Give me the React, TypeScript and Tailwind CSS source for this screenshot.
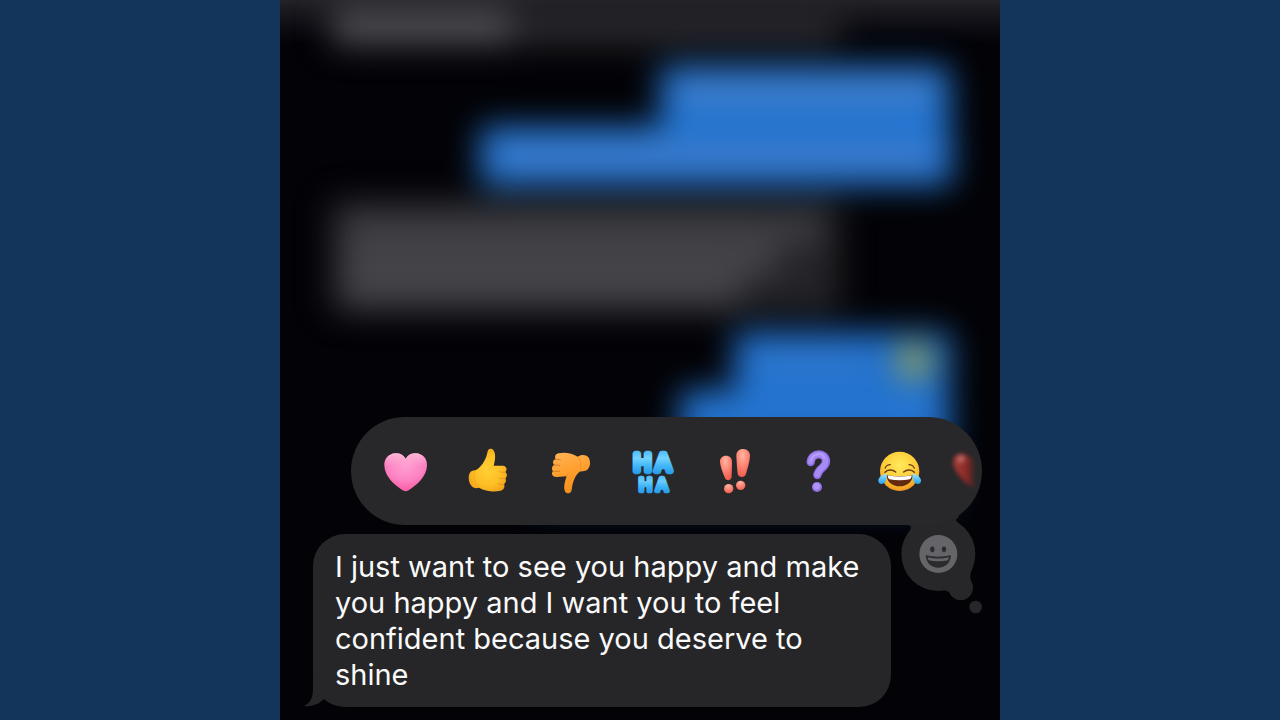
import React from "react";

function Heart() {
  return (
    <svg viewBox="33 51 144 144" className="size-12">
      <defs>
        <radialGradient id="heart" cx="0.5" cy="0.3" r="0.75">
          <stop offset="0" stopColor="#ffa0d2" />
          <stop offset="0.55" stopColor="#fd83c3" />
          <stop offset="1" stopColor="#f8549f" />
        </radialGradient>
        <linearGradient id="heartTop" x1="0" y1="0" x2="0" y2="1">
          <stop offset="0" stopColor="#ffc4dc" stopOpacity="0.8" />
          <stop offset="0.35" stopColor="#ffb0d4" stopOpacity="0" />
        </linearGradient>
      </defs>
      <path fill="url(#heart)" d="M107 86C100 74 88 69 76 70C56 71 42 87 43 107C45 140 72 163 98 181Q107 187 116 181C142 163 169 140 171 107C172 87 158 71 138 70C126 69 114 74 107 86Z" />
      <path fill="url(#heartTop)" d="M107 86C100 74 88 69 76 70C56 71 42 87 43 107C45 140 72 163 98 181Q107 187 116 181C142 163 169 140 171 107C172 87 158 71 138 70C126 69 114 74 107 86Z" />
    </svg>
  );
}

function ThumbUp() {
  return (
    <svg viewBox="280 51 144 144" className="size-12">
      <defs>
        <radialGradient id="up" cx="0.5" cy="0.5" r="0.6">
          <stop offset="0" stopColor="#ffd035" />
          <stop offset="0.6" stopColor="#fdbf25" />
          <stop offset="1" stopColor="#f2a01c" />
        </radialGradient>
      </defs>
      <path fill="url(#up)" d="M350 68C351 58 357 54 364 57C374 62 377 82 369 107L397 107C409 108 411 122 403 126C411 129 410 143 403 145C408 149 406 161 399 162C404 168 401 180 390 182C368 187 345 184 325 173C312 178 299 170 295 152C292 132 298 121 314 121C331 112 345 92 350 68Z" />
      <path fill="none" stroke="#e09018" strokeWidth="2.5" strokeLinecap="round" d="M405 126C398 128 392 127 387 125M405 145C398 147 392 146 386 144M400 163C393 164 387 163 383 161" />
      <path fill="none" stroke="#e8991c" strokeWidth="2.5" strokeLinecap="round" d="M369 107C365 113 360 116 354 117M313 122C307 136 311 160 325 173" opacity="0.5" />
    </svg>
  );
}

function ThumbDown() {
  return (
    <svg viewBox="48 51 144 144" className="size-12">
      <defs>
        <linearGradient id="down" x1="0" y1="0" x2="0.3" y2="1">
          <stop offset="0" stopColor="#ffb457" />
          <stop offset="0.55" stopColor="#ff9f2e" />
          <stop offset="1" stopColor="#f5901e" />
        </linearGradient>
      </defs>
      <path fill="url(#down)" d="M86 70C103 66 126 69 143 80C155 72 171 74 177 85C183 98 180 112 172 119C163 125 154 123 149 125C135 136 128 155 125 180C123 191 111 193 106 186C100 176 103 158 110 139L80 141C66 142 62 128 70 124C64 120 65 107 73 105C67 101 68 89 77 88C73 80 77 71 86 70Z" />
      <path fill="none" stroke="#cf701a" strokeWidth="2.5" strokeLinecap="round" d="M76 89C82 87 87 88 91 90M71 106C77 104 84 105 89 107M68 125C75 123 83 123 89 124" />
      <path fill="none" stroke="#df7b1a" strokeWidth="2.5" strokeLinecap="round" d="M110 139C112 133 115 129 120 126M144 81C153 93 155 110 149 124" opacity="0.5" />
    </svg>
  );
}

function HaHa() {
  return (
    <svg viewBox="295 51 144 144" className="size-12" fontFamily="Inter, 'Liberation Sans', sans-serif" fontWeight="400" textAnchor="middle">
      <defs>
        <linearGradient id="haTop" gradientUnits="userSpaceOnUse" x1="0" y1="64" x2="0" y2="133">
          <stop offset="0" stopColor="#4dbcf8" />
          <stop offset="0.3" stopColor="#74d3fe" />
          <stop offset="0.6" stopColor="#45b9fa" />
          <stop offset="1" stopColor="#2499e6" />
        </linearGradient>
        <linearGradient id="haBottom" gradientUnits="userSpaceOnUse" x1="0" y1="138" x2="0" y2="190">
          <stop offset="0" stopColor="#4dbcf8" />
          <stop offset="0.3" stopColor="#6accfd" />
          <stop offset="0.6" stopColor="#3eb3f8" />
          <stop offset="1" stopColor="#2499e6" />
        </linearGradient>
      </defs>
      <text strokeLinejoin="round" strokeLinecap="round">
        <tspan x="335 398" y="124" fontSize="70" fill="url(#haTop)" stroke="url(#haTop)" strokeWidth="19">HA</tspan>
        <tspan x="344 394" y="183" fontSize="52" fill="url(#haBottom)" stroke="url(#haBottom)" strokeWidth="14">HA</tspan>
      </text>
    </svg>
  );
}

function Exclaim() {
  return (
    <svg viewBox="63 51 144 144" className="size-12">
      <defs>
        <radialGradient id="bang" cx="0.45" cy="0.22" r="0.85">
          <stop offset="0" stopColor="#ffb5a3" />
          <stop offset="0.5" stopColor="#fd8371" />
          <stop offset="1" stopColor="#ee5549" />
        </radialGradient>
      </defs>
      <g fill="url(#bang)">
        <path d="M90 97C89 84 97 77 108 77C119 77 127 85 126 97L125 141C124 153 107 154 104 142C98 126 92 114 90 97Z" />
        <path d="M139 79C138 65 147 57 159 57C173 57 181 67 180 79C179 99 172 115 168 132C165 144 145 144 143 131C141 115 140 97 139 79Z" />
        <circle cx="116" cy="176" r="14" />
        <circle cx="152" cy="166" r="14" />
      </g>
    </svg>
  );
}

function Question() {
  return (
    <svg viewBox="311 51 144 144" className="size-12">
      <g fill="none" strokeLinecap="round">
        <path stroke="#8d6de3" strokeWidth="25" d="M361 96C364 66 407 66 407 94C407 114 386 112 381 135" />
        <path stroke="#a78af3" strokeWidth="17" d="M361 95C364 66 407 66 406 94C406 113 385 112 381 134" />
        <path stroke="#c0a8ff" strokeWidth="6" opacity="0.7" d="M362 91C367 69 397 66 402 84" />
      </g>
      <circle cx="380" cy="171" r="15" fill="#9273e8" />
      <circle cx="379" cy="169" r="10" fill="#b094f8" />
    </svg>
  );
}

function Laugh() {
  return (
    <svg viewBox="79 111 144 144" className="size-12">
      <defs>
        <radialGradient id="face" cx="0.5" cy="0.35" r="0.65">
          <stop offset="0" stopColor="#ffeb5c" />
          <stop offset="0.65" stopColor="#fdca37" />
          <stop offset="1" stopColor="#f2981f" />
        </radialGradient>
        <linearGradient id="tear" x1="0" y1="0" x2="0" y2="1">
          <stop offset="0" stopColor="#9ae6ff" />
          <stop offset="1" stopColor="#28a2ee" />
        </linearGradient>
      </defs>
      <circle cx="150" cy="184" r="59" fill="url(#face)" />
      <path fill="#642a10" d="M111 195C136 200 164 200 189 195C189 216 172 229 150 229C128 229 111 216 111 195Z" />
      <path fill="#fff" d="M114 196C137 201 163 201 186 196C186 202 184 206 181 208C162 212 138 212 119 208C116 206 114 202 114 196Z" />
      <g fill="none" stroke="#713b10" strokeLinecap="round">
        <path strokeWidth="4.5" d="M106 187C113 178 128 177 138 186M162 186C172 177 187 178 194 187" />
        <path strokeWidth="3.5" d="M106 175C109 168 115 164 122 164M178 164C185 164 191 168 194 175" />
      </g>
      <path fill="url(#tear)" d="M111 191C100 192 87 200 86 211C85 220 94 225 102 220C110 215 112 203 111 191Z" />
      <path fill="url(#tear)" d="M189 191C200 192 213 200 214 211C215 220 206 225 198 220C190 215 188 203 189 191Z" />
    </svg>
  );
}

const reactions = [
  { label: "Love", icon: <Heart /> },
  { label: "Like", icon: <ThumbUp /> },
  { label: "Dislike", icon: <ThumbDown /> },
  { label: "Laugh", icon: <HaHa /> },
  { label: "Emphasize", icon: <Exclaim /> },
  { label: "Question", icon: <Question /> },
  { label: "Tears of joy", icon: <Laugh /> },
];

function Conversation() {
  return (
    <div aria-hidden="true" className="absolute inset-0 overflow-hidden bg-linear-to-b from-[#222227] to-[#030307] to-[44px]">
      <div className="flex flex-col blur-[16px]">
        <div className="mt-1 mr-[160px] ml-[50px] h-[42px] rounded-b-xl bg-[#26262a] px-1 pt-1">
          <div className="h-9 w-[176px] bg-[#4c4c51]" />
        </div>
        <div className="mt-5 mr-[50px] h-[60px] w-[290px] self-end rounded-lg bg-[#2173cf] px-4 pt-4">
          <div className="h-5 bg-[#4b82ca]" />
        </div>
        <div className="mr-[48px] h-[60px] w-[472px] self-end rounded-lg bg-[#2173cf] px-4 pt-5">
          <div className="h-5 bg-[#477eca]" />
        </div>
        <div className="mt-[14px] mr-[160px] ml-[50px] flex h-[112px] flex-col rounded-lg bg-[#242428] px-3 pt-3">
          <div className="h-8 w-[480px] bg-[#3d3d42]" />
          <div className="h-8 w-[435px] bg-[#434348]" />
          <div className="h-8 w-[400px] bg-[#434348]" />
        </div>
        <div className="mt-5 mr-[50px] flex h-[58px] w-[216px] items-center justify-between self-end rounded-lg bg-[#1f70cd] pr-[18px] pl-4">
          <div className="h-5 w-[120px] bg-[#347acd]" />
          <div className="size-9 rounded-full bg-[#98a04e]" />
        </div>
        <div className="mr-[50px] h-[56px] w-[270px] self-end rounded-lg bg-[#2474d0]" />
        <div className="mt-1 mr-[48px] h-[54px] w-[420px] self-end rounded-lg bg-[#174a8a]" />
      </div>
    </div>
  );
}

function AddEmoji() {
  return (
    <button type="button" aria-label="Add emoji reaction" className="absolute top-[93px] -right-[18px]">
      <svg viewBox="0 0 360 360" className="size-[120px]">
        <g fill="#27272a">
          <path d="M78 44C92 45 96 50 90 60L130 80L240 55L228 29L238 18L80 20Z" />
          <circle cx="175" cy="132" r="111" />
          <circle cx="242" cy="233" r="37" />
          <path d="M277 175C266 200 272 210 279 230L205 246C200 240 190 240 180 241Z" />
          <circle cx="287" cy="291" r="19" />
        </g>
        <circle cx="175" cy="132" r="57" fill="#656468" />
        <g fill="#2b2b2e">
          <ellipse cx="157" cy="118" rx="6.5" ry="8.5" />
          <ellipse cx="192" cy="118" rx="6.5" ry="8.5" />
          <path d="M137 136Q175 144 213 136C211 160 196 173 175 173S139 160 137 136Z" />
        </g>
        <path fill="#656468" d="M143 142Q175 149 207 142Q206 147 204 151Q175 157 146 151Q144 147 143 142Z" />
      </svg>
    </button>
  );
}

export default function App() {
  return (
    <div className="flex min-h-screen justify-center bg-[#14355b]">
      <main className="relative flex w-full max-w-[720px] flex-col justify-end overflow-hidden bg-[#030307] pb-[13px]">
        <Conversation />
        <div className="relative mr-[18px] mb-[9px] ml-[71px]">
          <AddEmoji />
          <div className="relative flex h-[108px] items-center justify-between overflow-hidden rounded-[60px] bg-[#28282a] pr-[58px] pl-[30px]">
            {reactions.map((r) => (
              <button key={r.label} type="button" aria-label={r.label}>
                {r.icon}
              </button>
            ))}
            <svg viewBox="0 0 32 48" className="absolute top-[30px] right-0 w-8 blur-[2px]" aria-hidden="true">
              <defs>
                <linearGradient id="edge" x1="0" y1="0" x2="1" y2="0">
                  <stop offset="0.1" stopColor="#a03a36" />
                  <stop offset="0.6" stopColor="#8d2925" />
                  <stop offset="1" stopColor="#8d2925" stopOpacity="0.1" />
                </linearGradient>
              </defs>
              <path fill="url(#edge)" d="M3 16C3 8 10 4 16 8C20 9 23 12 25 16V42C17 38 5 27 3 16Z" />
              <circle cx="11" cy="12" r="4" fill="#c77a75" opacity="0.7" />
            </svg>
          </div>
        </div>
        <div className="relative ml-[33px] w-full max-w-[578px] rounded-[32px] bg-[#262628] px-[22px] pt-[15px] pb-[14px]">
          <svg viewBox="0 0 26 30" className="absolute bottom-0 -left-[9px] w-[26px]" aria-hidden="true">
            <path fill="#262628" d="M9 0V12C9 21 6 26 0 29C8 30 15 27 20 22L26 8Z" />
          </svg>
          <p className="relative font-[Inter,'Liberation_Sans',sans-serif] text-[29px] leading-[36px] text-[#fafafa]">
            I just want to see you happy and make you happy and I want you to feel confident because you deserve to shine
          </p>
        </div>
      </main>
    </div>
  );
}
